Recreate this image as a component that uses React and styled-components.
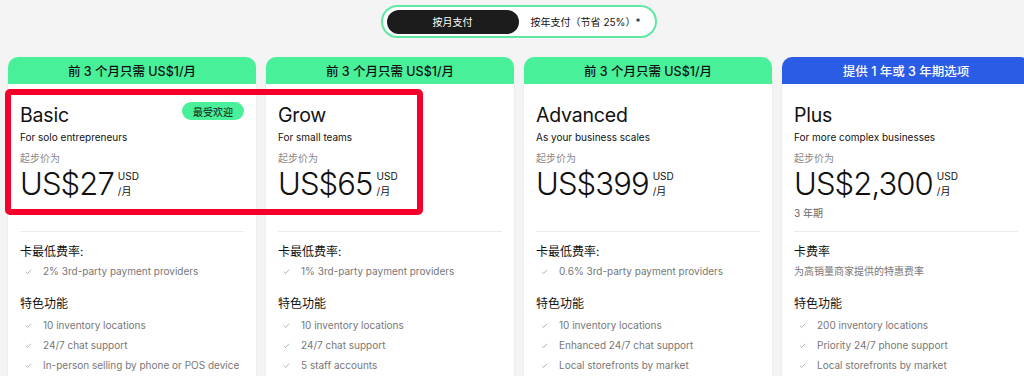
import React from "react"
import styled, { createGlobalStyle } from "styled-components"

const GlobalStyle = createGlobalStyle`
    html, body {
        margin: 0;
        padding: 0;
        background: #f4f4f4;
        overflow: hidden;
    }
    body {
        font-family: Inter, "Noto Sans CJK SC", sans-serif;
        color: #111;
    }
`

const Page = styled.div`
    padding: 5px 8px 0;
    width: 1040px;
`

const ToggleRow = styled.div`
    display: flex;
    width: 1022px;
    justify-content: center;
`

const Toggle = styled.div`
    display: flex;
    align-items: center;
    gap: 12px;
    height: 29px;
    padding: 0 15px 0 4px;
    border: 2px solid #5ee8a0;
    border-radius: 999px;
    background: #fff;
`

const ToggleOption = styled.div`
    display: flex;
    align-items: center;
    justify-content: center;
    height: 24px;
    font-size: 10px;
    border-radius: 999px;
    ${(p) =>
        p.$active
            ? `
        width: 132px;
        background: #1c1c1c;
        color: #fff;
    `
            : `
        color: #111;
    `}
`

const Grid = styled.div`
    position: relative;
    display: grid;
    grid-template-columns: repeat(4, 248px);
    gap: 10px;
    margin-top: 19px;
`

const Card = styled.div`
    display: flex;
    flex-direction: column;
    background: #fff;
    border-radius: 10px;
    box-shadow: 0 1px 3px rgba(0, 0, 0, 0.06);
    height: 330px;
    overflow: hidden;
`

const CardHeader = styled.div`
    height: 27px;
    display: flex;
    align-items: center;
    justify-content: center;
    font-size: 12.5px;
    font-weight: 500;
    background: ${(p) => (p.$blue ? "#2b5ce6" : "#48f099")};
    color: ${(p) => (p.$blue ? "#fff" : "#111")};
`

const CardBody = styled.div`
    padding: 18px 12px 0;
`

const TitleRow = styled.div`
    display: flex;
    align-items: flex-start;
    justify-content: space-between;
`

const Title = styled.div`
    font-size: 19.5px;
    line-height: 26px;
    font-weight: 400;
    letter-spacing: -0.2px;
`

const Badge = styled.div`
    padding: 0 11px;
    height: 18px;
    display: flex;
    align-items: center;
    border-radius: 999px;
    background: #48f099;
    font-size: 10px;
`

const Subtitle = styled.div`
    font-size: 10px;
    line-height: 14px;
    margin-top: 2px;
`

const StartLabel = styled.div`
    font-size: 10px;
    line-height: 14px;
    color: #888;
    margin-top: 7px;
`

const PriceRow = styled.div`
    display: flex;
    align-items: flex-start;
    gap: 4px;
    margin-top: 1px;
`

const Price = styled.div`
    font-size: 31px;
    line-height: 36px;
    font-weight: 300;
    letter-spacing: -0.9px;
`

const PriceUnit = styled.div`
    display: flex;
    flex-direction: column;
    font-size: 10px;
    line-height: 15px;
    margin-top: 3px;
`

const Term = styled.div`
    font-size: 10px;
    line-height: 14px;
    color: #666;
    margin-top: 4px;
`

const Divider = styled.div`
    height: 1px;
    background: #ececec;
    margin: ${(p) => (p.$term ? "11px" : "29px")} 0 0;
`

const SectionTitle = styled.div`
    font-size: 12px;
    line-height: 16px;
    margin-top: ${(p) => p.$top || 12}px;
`

const FeatureList = styled.ul`
    list-style: none;
    margin: ${(p) => p.$gap || 1}px 0 0;
    padding: 0;
`

const Feature = styled.li`
    display: flex;
    align-items: center;
    gap: 11px;
    height: 20px;
    font-size: 10px;
    color: #777;
    padding-left: 5px;
    white-space: nowrap;
`

const Note = styled.div`
    font-size: 10px;
    line-height: 20px;
    color: #777;
    margin-top: 1px;
`

const Highlight = styled.div`
    position: absolute;
    left: -3px;
    top: 32px;
    width: 406px;
    height: 114px;
    border: 6px solid #f5002a;
    border-radius: 5px;
    pointer-events: none;
`

const Check = () => (
    <svg width="7" height="7" viewBox="0 0 8 8" fill="none">
        <path d="M1 4.3 L3 6.2 L7 2" stroke="#a0a0a0" strokeWidth="0.9" />
    </svg>
)

const plans = [
    {
        header: "前 3 个月只需 US$1/月",
        name: "Basic",
        badge: "最受欢迎",
        subtitle: "For solo entrepreneurs",
        price: "US$27",
        rateTitle: "卡最低费率:",
        rates: ["2% 3rd-party payment providers"],
        features: [
            "10 inventory locations",
            "24/7 chat support",
            "In-person selling by phone or POS device",
        ],
    },
    {
        header: "前 3 个月只需 US$1/月",
        name: "Grow",
        subtitle: "For small teams",
        price: "US$65",
        rateTitle: "卡最低费率:",
        rates: ["1% 3rd-party payment providers"],
        features: ["10 inventory locations", "24/7 chat support", "5 staff accounts"],
    },
    {
        header: "前 3 个月只需 US$1/月",
        name: "Advanced",
        subtitle: "As your business scales",
        price: "US$399",
        rateTitle: "卡最低费率:",
        rates: ["0.6% 3rd-party payment providers"],
        features: [
            "10 inventory locations",
            "Enhanced 24/7 chat support",
            "Local storefronts by market",
        ],
    },
    {
        header: "提供 1 年或 3 年期选项",
        blue: true,
        name: "Plus",
        subtitle: "For more complex businesses",
        price: "US$2,300",
        term: "3 年期",
        rateTitle: "卡费率",
        note: "为高销量商家提供的特惠费率",
        features: [
            "200 inventory locations",
            "Priority 24/7 phone support",
            "Local storefronts by market",
        ],
    },
]

export default function App() {
    return (
        <>
            <GlobalStyle />
            <Page>
                <ToggleRow>
                    <Toggle>
                        <ToggleOption $active>按月支付</ToggleOption>
                        <ToggleOption>按年支付（节省 25%）*</ToggleOption>
                    </Toggle>
                </ToggleRow>
                <Grid>
                    {plans.map((plan) => (
                        <Card key={plan.name}>
                            <CardHeader $blue={plan.blue}>{plan.header}</CardHeader>
                            <CardBody>
                                <TitleRow>
                                    <Title>{plan.name}</Title>
                                    {plan.badge && <Badge>{plan.badge}</Badge>}
                                </TitleRow>
                                <Subtitle>{plan.subtitle}</Subtitle>
                                <StartLabel>起步价为</StartLabel>
                                <PriceRow>
                                    <Price>{plan.price}</Price>
                                    <PriceUnit>
                                        <span>USD</span>
                                        <span>/月</span>
                                    </PriceUnit>
                                </PriceRow>
                                {plan.term && <Term>{plan.term}</Term>}
                                <Divider $term={!!plan.term} />
                                <SectionTitle>{plan.rateTitle}</SectionTitle>
                                {plan.note ? (
                                    <Note>{plan.note}</Note>
                                ) : (
                                    <FeatureList>
                                        {plan.rates.map((r) => (
                                            <Feature key={r}>
                                                <Check />
                                                {r}
                                            </Feature>
                                        ))}
                                    </FeatureList>
                                )}
                                <SectionTitle $top={15}>特色功能</SectionTitle>
                                <FeatureList $gap={3}>
                                    {plan.features.map((f) => (
                                        <Feature key={f}>
                                            <Check />
                                            {f}
                                        </Feature>
                                    ))}
                                </FeatureList>
                            </CardBody>
                        </Card>
                    ))}
                    <Highlight />
                </Grid>
            </Page>
        </>
    )
}
